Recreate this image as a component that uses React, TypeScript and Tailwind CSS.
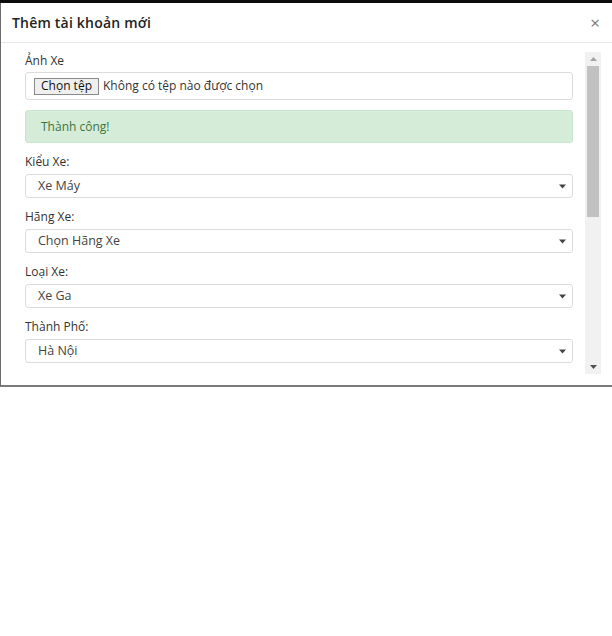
import { ReactNode } from "react";

const FONT = { fontFamily: '"Open Sans", "Noto Sans", sans-serif' };

function Caret() {
  return (
    <svg width="7" height="5" viewBox="0 0 7 5" className="shrink-0">
      <path d="M0 0.5 L7 0.5 L3.5 4.5 Z" fill="#444" />
    </svg>
  );
}

function Field({ label, value }: { label: string; value: string }) {
  return (
    <div className="mt-[11px]">
      <div className="h-4 text-[12px] leading-4 text-[#333]">{label}</div>
      <div className="mt-[4px] flex h-6 items-center justify-between rounded-[3px] border border-[#dcdcdc] bg-white pl-[12px] pr-[6px]">
        <span className="text-[12.5px] text-[#444]">{value}</span>
        <Caret />
      </div>
    </div>
  );
}

function ScrollArrow({ up }: { up?: boolean }) {
  return (
    <div className="flex h-[14px] items-center justify-center">
      <svg width="7" height="4" viewBox="0 0 7 4">
        <path d={up ? "M0 4 L7 4 L3.5 0 Z" : "M0 0 L7 0 L3.5 4 Z"} fill={up ? "#a3a3a3" : "#505050"} />
      </svg>
    </div>
  );
}

function Modal({ children }: { children: ReactNode }) {
  return (
    <div className="flex h-[384px] flex-col border-b-2 border-l border-b-[#7a7a7a] border-l-[#6b6b6b] bg-white">
      <div className="flex h-[40px] shrink-0 items-center justify-between border-b border-[#e8e8e8] pl-[11px] pr-[12px]">
        <span className="text-[14px] font-semibold tracking-[0.2px] text-[#222]">Thêm tài khoản mới</span>
        <span className="text-[17px] leading-none text-[#777]">×</span>
      </div>
      <div className="flex min-h-0 flex-1">
        <div className="flex-1 pl-[24px] pr-[12px]">{children}</div>
        <div className="mr-[11px] mt-[9px] mb-[11px] flex w-4 flex-col bg-[#f1f1f1]">
          <ScrollArrow up />
          <div className="mx-[2px] h-[151px] bg-[#c1c1c1]" />
          <div className="flex-1" />
          <ScrollArrow />
        </div>
      </div>
    </div>
  );
}

export default function App() {
  return (
    <div className="h-[636px] w-[612px] overflow-hidden bg-white" style={FONT}>
      <div className="h-[3px] bg-[#0b0b0b]" />
      <Modal>
        <div className="pt-[10px]">
          <div className="h-4 text-[12px] leading-4 text-[#333]">Ảnh Xe</div>
          <div className="mt-[3px] flex h-7 items-center rounded-[3px] border border-[#dcdcdc] pl-[8px]">
            <span className="flex h-[17px] items-center border border-[#8a8a8a] bg-[#efefef] px-[6px] text-[12px] text-[#111]">
              Chọn tệp
            </span>
            <span className="ml-[4px] text-[12px] text-[#333]">Không có tệp nào được chọn</span>
          </div>
          <div className="mt-[10px] flex h-[33px] items-center rounded-[3px] border border-[#c9e6cf] bg-[#d5ecd9] pl-[15px] text-[12px] text-[#3c763d]">
            Thành công!
          </div>
        </div>
        <Field label="Kiểu Xe:" value="Xe Máy" />
        <Field label="Hãng Xe:" value="Chọn Hãng Xe" />
        <Field label="Loại Xe:" value="Xe Ga" />
        <Field label="Thành Phố:" value="Hà Nội" />
      </Modal>
    </div>
  );
}
